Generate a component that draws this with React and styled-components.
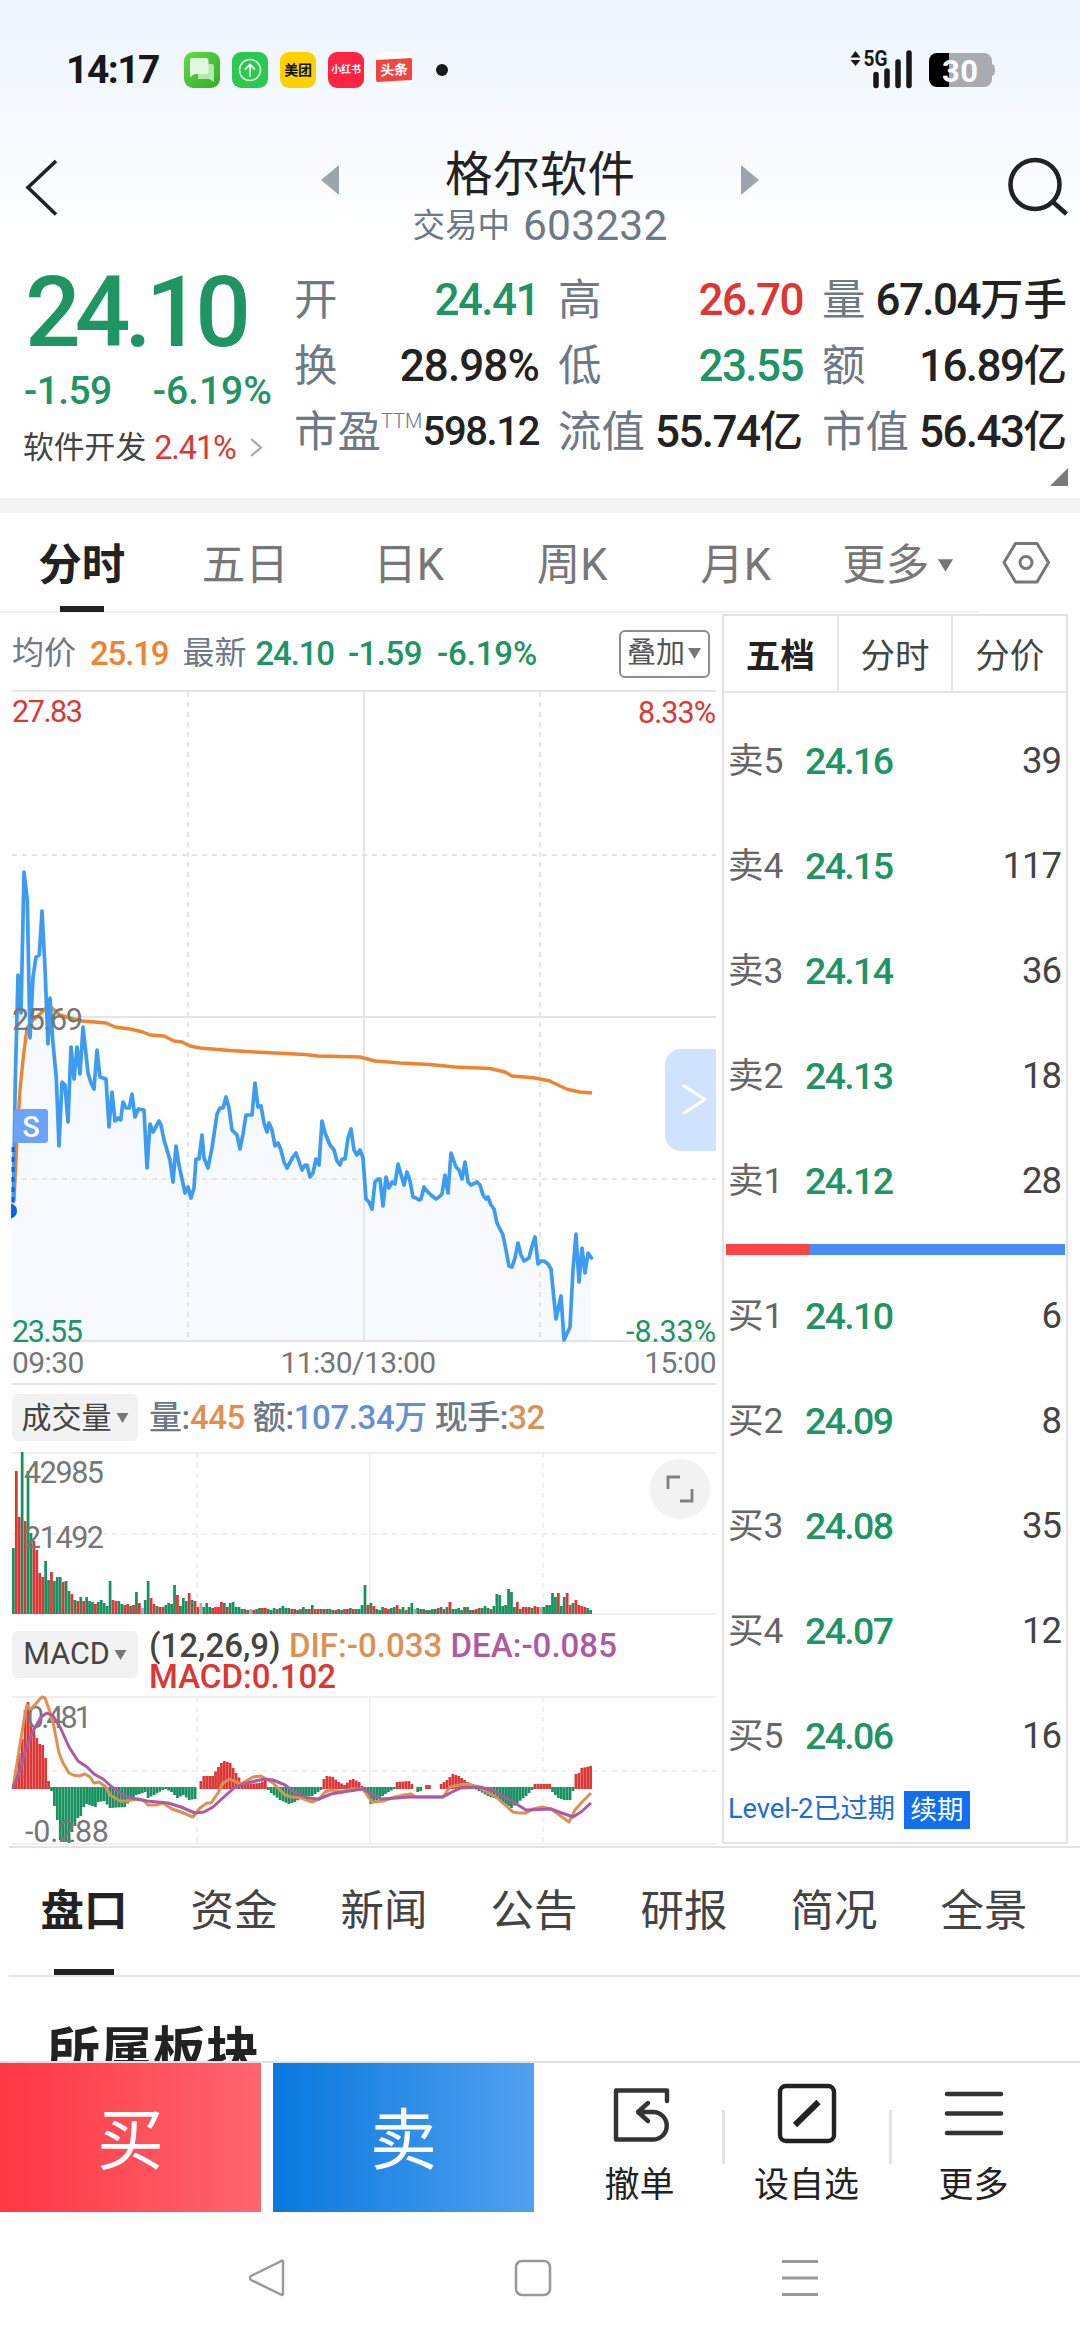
import React from "react";
import styled, { createGlobalStyle } from "styled-components";

const C = {
  ink: "#222222",
  slate: "#6d7985",
  gray: "#777777",
  dark: "#444444",
  green: "#1f9465",
  red: "#dc3734",
  orange: "#ef8430",
  line: "#e4e6e4",
  blue: "#3d9bf0",
};

const Global = createGlobalStyle`
  * { box-sizing: border-box; }
  body { margin: 0; background: #fefefe; }
  #root { width: 1080px; }
`;

const Screen = styled.div`
  width: 1080px;
  height: 2344px;
  overflow: hidden;
  display: flex;
  flex-direction: column;
  background: linear-gradient(180deg, #edf4fe 0, #f4f8ff 90px, #fefefe 235px);
  font-family: Roboto, "Noto Sans CJK SC", sans-serif;
  color: ${C.ink};
  line-height: 1;
  white-space: nowrap;
`;

const Num = styled.span`
  font-size: ${(p) => p.$size}px;
  font-weight: ${(p) => p.$weight || 500};
  color: ${(p) => p.$color || "inherit"};
  letter-spacing: ${(p) => (p.$ls === undefined ? -0.035 : p.$ls)}em;
`;

const Han = styled.span`
  font-size: ${(p) => p.$size}px;
  color: ${(p) => p.$color || "inherit"};
  letter-spacing: 0;
`;

/* ---------- status bar ---------- */
const StatusBar = styled.div`
  height: 124px;
  padding: 16px 84px 0 66px;
  display: flex;
  align-items: center;
  justify-content: space-between;
`;
const StatusGroup = styled.div`
  display: flex;
  align-items: center;
  gap: ${(p) => p.$gap}px;
`;
const Clock = styled.span`
  width: 106px;
  font-size: 39px;
  font-weight: 700;
  letter-spacing: -1.5px;
  color: #181818;
`;
const AppIcon = styled.span`
  width: 36px;
  height: 36px;
  border-radius: 9px;
  display: flex;
  align-items: center;
  justify-content: center;
  overflow: hidden;
  background: ${(p) => p.$bg};
  color: ${(p) => p.$fg || "#fff"};
  font-size: ${(p) => p.$size || 14}px;
  font-weight: 700;
  letter-spacing: -0.2px;
`;
const Ribbon = styled.span`
  width: 36px;
  height: 22px;
  background: #f5443f;
  transform: skewY(-3deg);
  display: flex;
  align-items: center;
  justify-content: center;
`;
const Dot = styled.span`
  width: 12px;
  height: 12px;
  border-radius: 50%;
  margin-left: 12px;
  background: #181818;
`;
const Signal = styled.svg`
  overflow: visible;
`;

/* ---------- title bar ---------- */
const TitleBar = styled.header`
  height: 138px;
  display: flex;
  justify-content: space-between;
  padding: 0 12px 0 24px;
`;
const TitleCenter = styled.div`
  width: 440px;
  display: flex;
  flex-direction: column;
  align-items: center;
  margin-left: 14px;
`;
const TitleRow = styled.div`
  width: 440px;
  height: 62px;
  padding-top: 22px;
  display: flex;
  justify-content: space-between;
  align-items: flex-start;
`;
const StockName = styled.h1`
  margin: 4px 0 0;
  font-size: 47.5px;
  font-weight: 400;
  line-height: 50px;
`;
const SubRow = styled.div`
  display: flex;
  align-items: center;
  gap: 13px;
  margin-top: 19px;
  color: ${C.slate};
`;

/* ---------- quote ---------- */
const Quote = styled.section`
  position: relative;
  height: 236px;
  display: flex;
`;
const PriceCol = styled.div`
  width: 294px;
  padding-left: 22px;
  display: flex;
  flex-direction: column;
`;
const BigPrice = styled.div`
  height: 95px;
  padding: 2px 0 0 3px;
  font-size: 98px;
  font-weight: 500;
  letter-spacing: -6px;
  color: ${C.green};
`;
const ChangeRow = styled.div`
  height: 68px;
  margin-top: 1px;
  padding: 14px 0 0 2px;
  display: flex;
  gap: 41px;
`;
const SectorRow = styled.div`
  display: flex;
  align-items: center;
  gap: 8px;
  height: 36px;
  margin-top: 4px;
  padding-left: 1px;
`;
const Stats = styled.div`
  display: grid;
  grid-template-columns: 245px 245px 245px;
  grid-auto-rows: 66px;
  column-gap: 19px;
  padding-top: 4px;
`;
const Stat = styled.div`
  display: flex;
  align-items: center;
  justify-content: space-between;
  & > ${Num} {
    padding-top: 2px;
  }
`;
const StatLabel = styled.span`
  font-size: 43.5px;
  color: ${C.slate};
  padding-top: 4px;
  display: flex;
`;
const Sup = styled.sup`
  font-size: 20px;
  line-height: 19px;
  font-weight: 300;
  margin-top: 1px;
`;
const Corner = styled.svg`
  position: absolute;
  right: 12px;
  bottom: 12px;
`;
const Gap = styled.div`
  height: 15px;
  background: #f4f4f4;
`;

/* ---------- period tabs ---------- */
const PeriodTabs = styled.nav`
  height: 101px;
  display: flex;
  background: #fefefe;
`;
const PeriodTab = styled.div`
  position: relative;
  width: ${(p) => p.$w || 163.5}px;
  height: 100px;
  padding-top: 7px;
  border-bottom: 2px solid #f1f1f1;
  display: flex;
  align-items: center;
  justify-content: center;
  gap: 9px;
  font-size: 43.5px;
  font-weight: ${(p) => (p.$on ? 700 : 400)};
  color: ${(p) => (p.$on ? C.ink : C.gray)};
  &::after {
    content: "";
    display: ${(p) => (p.$on ? "block" : "none")};
    position: absolute;
    bottom: -1px;
    width: 44px;
    height: 6px;
    background: ${C.ink};
  }
`;

/* ---------- chart + book ---------- */
const Main = styled.section`
  height: 1232px;
  display: flex;
  background: #fefefe;
`;
const Charts = styled.div`
  width: 722px;
  padding-left: 12px;
  display: flex;
  flex-direction: column;
`;
const InfoRow = styled.div`
  height: 78px;
  width: 704px;
  display: flex;
  align-items: center;
  border-bottom: 2px solid ${C.line};
`;
const InfoItem = styled.span`
  margin-left: ${(p) => p.$ml || 0}px;
  padding-top: 2px;
  font-size: 32px;
  color: ${C.slate};
`;
const Overlay = styled.button`
  margin: 3px 6px 0 auto;
  width: 91px;
  height: 48px;
  padding: 0 0 0 6px;
  border: 2px solid #8d8d8d;
  border-radius: 6px;
  background: transparent;
  font: 400 29px/1 Roboto, "Noto Sans CJK SC", sans-serif;
  color: #555;
  display: flex;
  align-items: center;
  gap: 3px;
`;
const Plot = styled.svg`
  display: block;
  flex: none;
  overflow: visible;
`;
const AxisText = styled.text`
  font-size: 30.5px;
  fill: ${(p) => p.$fill || C.gray};
`;
const TimeAxis = styled.div`
  width: 704px;
  height: 43px;
  padding-top: 1px;
  display: flex;
  align-items: center;
  justify-content: space-between;
  border-bottom: 2px solid ${C.line};
  font-size: 30px;
  letter-spacing: -0.6px;
  color: ${C.gray};
`;
const MidTime = styled.span`
  margin-right: 12px;
`;
const IndicatorHead = styled.div`
  height: ${(p) => p.$h}px;
  padding-top: ${(p) => p.$pt}px;
  display: flex;
  gap: 11px;
`;
const Picker = styled.div`
  width: 126px;
  height: 47px;
  border-radius: 6px;
  background: #f2f2f2;
  color: ${C.dark};
  font-size: ${(p) => p.$size}px;
  display: flex;
  align-items: center;
  justify-content: center;
  gap: 4px;
`;
const Legend = styled.div`
  margin-top: ${(p) => p.$mt || 0}px;
  font-size: 33px;
  line-height: ${(p) => p.$lh || 47}px;
  font-weight: 500;
  letter-spacing: ${(p) => p.$ls || 0}px;
  white-space: pre-line;
  color: ${C.slate};
`;
const Tint = styled.span`
  color: ${(p) => p.$c};
`;

/* ---------- order book ---------- */
const Book = styled.aside`
  width: 346px;
  height: 1230px;
  border: 2px solid #e2e2e2;
  display: flex;
  flex-direction: column;
`;
const BookTabs = styled.div`
  display: flex;
  height: 77px;
  border-bottom: 2px solid #e6e6e6;
`;
const BookTab = styled.div`
  flex: 1;
  display: flex;
  align-items: center;
  justify-content: center;
  padding-top: 5px;
  font-size: 34.5px;
  font-weight: ${(p) => (p.$on ? 700 : 400)};
  color: ${(p) => (p.$on ? C.ink : C.dark)};
  & + & {
    border-left: 2px solid #e6e6e6;
  }
`;
const Levels = styled.div`
  padding: ${(p) => p.$pt}px 5px 0 4px;
`;
const Level = styled.div`
  height: 105px;
  display: flex;
  align-items: center;
`;
const Side = styled.span`
  width: 77px;
  font-size: 35.5px;
  color: #666;
`;
const Qty = styled.span`
  margin-left: auto;
  font-size: 36.5px;
  letter-spacing: -1px;
  color: ${C.dark};
`;
const Balance = styled.div`
  display: flex;
  height: 11px;
  margin: 10px 1px 0 2px;
  background: #4a8df8;
  &::before {
    content: "";
    width: 84px;
    background: #fb4445;
  }
`;
const Renew = styled.div`
  display: flex;
  align-items: center;
  gap: 9px;
  padding: 2px 0 0 4px;
  font-size: 27.3px;
  letter-spacing: -0.1px;
  color: #1a6ce0;
`;
const RenewTag = styled.span`
  width: 66px;
  height: 38px;
  background: #126ff0;
  color: #fff;
  font-size: 26.5px;
  display: flex;
  align-items: center;
  justify-content: center;
`;

/* ---------- detail tabs ---------- */
const DetailTabs = styled.nav`
  height: 131px;
  margin-left: 9px;
  border-top: 2px solid #e4e4e4;
  border-bottom: 2px solid #e4e4e4;
  display: flex;
`;
const DetailTab = styled.div`
  position: relative;
  width: 150px;
  display: flex;
  align-items: center;
  justify-content: center;
  font-size: 43.5px;
  font-weight: ${(p) => (p.$on ? 700 : 400)};
  color: ${(p) => (p.$on ? C.ink : C.dark)};
  &::after {
    content: "";
    display: ${(p) => (p.$on ? "block" : "none")};
    position: absolute;
    bottom: 0;
    left: 45px;
    width: 60px;
    height: 6px;
    background: ${C.ink};
  }
`;
const Sector = styled.section`
  height: 84px;
  overflow: hidden;
  padding: 50px 0 0 47px;
`;
const SectorTitle = styled.h2`
  margin: 0;
  font-size: 53px;
  line-height: 52px;
  font-weight: 700;
`;

/* ---------- bottom ---------- */
const ActionBar = styled.div`
  height: 151px;
  border-top: 2px solid #e0e0e0;
  display: flex;
`;
const Trade = styled.button`
  width: 261px;
  height: 149px;
  margin-right: 12px;
  padding: 8px 0 0;
  border: 0;
  color: #fff;
  font: 400 67px/1 Roboto, "Noto Sans CJK SC", sans-serif;
  background: ${(p) => p.$bg};
`;
const Actions = styled.div`
  display: flex;
  padding-left: 10px;
`;
const Action = styled.div`
  position: relative;
  width: 167px;
  padding-top: 15px;
  display: flex;
  flex-direction: column;
  align-items: center;
  font-size: 35px;
  gap: 20px;
  & + &::before {
    content: "";
    position: absolute;
    left: -1px;
    top: 47px;
    width: 3px;
    height: 54px;
    background: #e2e2e2;
  }
`;
const SystemNav = styled.div`
  height: 132px;
  display: flex;
  justify-content: space-between;
  padding: 45px 261px 0 247px;
`;

/* ---------- data ---------- */
const PRICE =
  "13.3,1201.7 15.3,1080 18,975 21,1013 24,872 27.3,900 30,1038 33,977 36,957 39.3,955 42,911 45,968 48,1044 50,998 52.7,1040 56.3,1078 59,1146 62,1082 65,1085 68,1122 71,1047 74,1079 77,1047 80,1074 83,1027 88,1073 91,1083 94,1089 97,1050 100,1077 106,1079 109,1127 112,1092 115,1121 118,1118 120.7,1120 123,1102 126,1108 129.3,1108 132,1094 135,1117 138.3,1109 144,1110 147,1168 150,1124 153,1132 159,1121 161,1125 164,1140 170,1160 173,1182 176,1146 179,1165 185,1193 188,1187 191,1198 194,1188 196,1159 199,1159 202,1135 204,1158 208,1168 212,1148 217,1114 220,1108 223,1108 226,1097 229,1108 232,1130 237,1135 240,1149 243,1134 246,1115 252,1115 255,1083 258,1107 261,1106 264,1123 267,1132 269,1123 272,1130 275,1146 278,1143 281,1150 284,1162 287,1168 293,1157 296,1153 302,1170 305,1165 307,1165 310,1177 313,1173 316,1159 319,1165 322,1121 325,1133 330,1145 334,1150 337,1161 340,1165 342,1159 345,1159 348,1138 351,1129 354,1150 357,1155 360,1150 363,1158 366,1199 369,1202 372,1209 375,1182 378,1179 380,1179 383,1206 386,1177 389,1188 392,1182 395,1184 398,1164 404,1185 407,1172 410,1181 413,1197 416,1198 419,1200 421,1199 424,1187 427,1191 431,1195 436,1199 439,1197 442,1194 445,1175 448,1193 451,1153 456,1167 459,1170 462,1179 465,1162 468,1182 471,1185 477,1182 480,1185 483,1195 486,1199 488,1197 491,1205 494,1209 497,1223 503,1235 506,1250 509,1266 512,1267 515,1258 518,1243 521,1255 524,1261 529,1258 532,1246 535,1237 538,1264 541,1261 544,1261 548,1264 551,1269 556,1319 561,1296 564,1340 570,1327 573,1270 576,1234 579,1282 582,1248 585,1273 588,1253 591.5,1258";
const AVERAGE =
  "14,1201 17,1140 20,1090 23,1060 27,1028 33,1020 40,1014 46,1008 52,1008 60,1015 70,1018 82,1021 106,1023 115,1027 130,1029 143,1032 150,1035 164,1036 174,1041 182,1042 190,1046 200,1048 230,1050.5 255,1052 275,1053 305,1054.5 318,1056 340,1056.5 360,1057 375,1061 400,1063 430,1064.5 455,1067 490,1068.5 505,1072 512,1076 535,1078 550,1081 560,1086 568,1089.5 580,1092 592,1093";
const DIF =
  "13,1788 18,1757 24,1720 27,1705 30,1709 33,1707 39,1700 42,1697 45,1698 50,1712 54,1727 59,1753 63,1763 69,1773 73,1775 79,1776 85,1774 90,1777 94,1783 99,1782 106,1787 110,1795 120,1801 126,1801 138,1799 143,1800 148,1805 156,1805 163,1803 172,1809 181,1812 193,1817 200,1808 207,1803 211,1803 218,1793 223,1783 230,1779 236,1782 241,1784 253,1777 261,1776 266,1779 273,1783 285,1795 292,1797 301,1798 312,1802 319,1799 325,1792 331,1790 342,1792 351,1789 363,1789 367,1795 372,1802 383,1801 395,1797 404,1795 411,1794 416,1797 443,1797 450,1787 459,1785 468,1784 478,1787 487,1792 496,1797 505,1805 513,1812 519,1813 526,1813 533,1809 542,1807 551,1809 558,1814 569,1822 575,1810 583,1801 591,1793";
const DEA =
  "13,1788 21,1768 25,1752 32,1733 41,1717 47,1713 53,1716 60,1727 69,1747 78,1761 87,1767 94,1774 103,1779 112,1787 122,1794 131,1798 147,1801 168,1803 181,1807 195,1813 204,1812 213,1807 225,1796 234,1788 243,1784 264,1779 273,1780 285,1785 294,1792 308,1798 319,1799 331,1794 349,1791 363,1789 370,1793 381,1799 397,1798 409,1797 443,1797 452,1792 461,1788 480,1787 494,1791 510,1800 526,1810 551,1809 562,1813 573,1817 581,1812 591,1803";

const VOLUME = (
  "66g 143r 97r 162g 93r 143g 81g 73r 64r 41r 37r 53g 34g 42r 33g 37g 37g 32r 33g 23g 20r 14g 13r 17g 13r 17g 13g 12g 10r 12g 14g 11g 8g 33g 14r 13r 13g 10g 9r 10r 8g 9r 22g 11r 6x 14g 33g 16r 10r 8g 7r 7r 9g 11g 10g 29g 19r 8g 16g 13g 21r 14g 13r 7r 11x 7g 11g 7g 6r 7r 7r 12r 11g 7r 11g 12g 7g " +
  "7g 5g 5r 4g 5x 4r 5g 6g 6r 6r 5g 4g 6g 5r 6g 8g 6g 6g 5r 5r 4g 5r 7g 5g 5r 9g 5r 5r 5g 5r 5g 5g 4g 4r 5g 4g 5r 5r 6g 5r 5g 5g 9g " +
  "29g 9r 11g 8r 5g 4g 7g 6r 5r 6g 7g 9r 5g 7g 4r 7g 11g 5x 6g 5r 5g 4r 4g 5g 5g 6r 7g 5r 7g 12r 5g 5g 6g 4g 7r 7g 4g 4r 5g 6r 6g 8g 6g 5r 8g 20g 19g 8g 9g 25g 22g 7g 12r 5g 7r 7r 7r 6g 8r 7r 7x 7g 9g 9g 21g 17g 21r 8g 17g 21r 9r 11g 14r 9r 8r 7r 6g 4g"
)
  .split(" ")
  .slice(0, 198)
  .map((s) => ({ h: parseInt(s, 10), tone: s.slice(-1) }));

const MACD_KEYS = [
  [0, 2], [1, 18], [2, 35], [3, 49], [4, 78], [5, 86], [6, 64], [7, 57], [8, 50], [9, 44], [10, 43], [11, 30], [12, 7],
  [13, -3], [14, -18], [15, -32], [16, -52], [18, -52], [19, -55], [20, -44], [21, -38], [22, -30], [23, -28], [24, -19],
  [25, -16], [28, -19], [29, -14], [31, -13], [33, -20], [38, -19], [40, -12], [42, -7], [45, -4], [46, -10], [48, -7],
  [51, -2], [52, -1], [54, -4], [56, -10], [58, -7], [60, -12], [62, -11], [63, 0], [64, 7], [65, 12], [68, 12],
  [70, 21], [71, 25], [72, 27], [74, 25], [76, 15], [78, 6], [80, 4], [84, 5], [86, 8], [87, -2], [88, -5], [91, -12], [94, -16],
  [96, -14], [99, -9], [102, -8], [105, -2], [106, 9], [107, 12], [109, 11], [111, 6], [113, 3], [115, 8], [116, 9],
  [118, 6], [120, -2], [121, -8], [122, -16], [125, -10], [128, -4], [130, -1], [131, 6], [135, 7], [136, 4], [137, 0],
  [138, -4], [139, -3], [140, 0], [141, 3], [142, 3], [143, 0], [145, 0], [146, 4], [148, 8], [150, 14], [152, 12], [155, 6], [157, 0],
  [159, -3], [162, -8], [166, -12], [170, -20], [172, -15], [175, -8], [177, -2], [178, 4], [183, 4], [184, -4],
  [186, -10], [188, -12], [190, -12], [191, -3], [192, 14], [193, 15], [194, 20], [197, 22],
];
const macdAt = (i) => {
  const k = MACD_KEYS.findIndex(([x]) => x >= i);
  const [x1, y1] = MACD_KEYS[k];
  if (x1 === i) return y1;
  const [x0, y0] = MACD_KEYS[k - 1];
  return y0 + ((y1 - y0) * (i - x0)) / (x1 - x0);
};
const TONE = { r: C.red, g: "#189160", x: "#aaaaaa" };
const barX = (i) => 12 + i * 2.93;

const ASKS = [["卖5", "24.16", 39], ["卖4", "24.15", 117], ["卖3", "24.14", 36], ["卖2", "24.13", 18], ["卖1", "24.12", 28]];
const BIDS = [["买1", "24.10", 6], ["买2", "24.09", 8], ["买3", "24.08", 35], ["买4", "24.07", 12], ["买5", "24.06", 16]];

const Tri = ({ w = 13, h = 11 }) => (
  <svg width={w} height={h} viewBox="0 0 13 11">
    <path d="M0 0H13L6.5 11Z" fill="#777" />
  </svg>
);

const LevelRows = ({ rows, pt }) => (
  <Levels $pt={pt}>
    {rows.map(([side, price, qty]) => (
      <Level key={side}>
        <Side>{side}</Side>
        <Num $size={37.5} $color={C.green} $ls={-0.044}>{price}</Num>
        <Qty>{qty}</Qty>
      </Level>
    ))}
  </Levels>
);

const PriceChart = () => (
  <Plot width="704" height="650" viewBox="12 692 704 650">
    <polygon points={`${PRICE} 591.5,1342 12,1342 12,1201`} fill="#f6faff" />
    <g stroke={C.line} strokeWidth="2">
      <path d="M364 692V1342M12 1017H716M12 1341H716" />
      <path d="M188 692V1342M540 692V1342M12 855H716M12 1179H716" strokeDasharray="5 5" />
    </g>
    <polyline points={AVERAGE} fill="none" stroke={C.orange} strokeWidth="3.4" strokeLinejoin="round" />
    <polyline points={PRICE} fill="none" stroke={C.blue} strokeWidth="3.7" strokeLinejoin="round" strokeLinecap="round" />
    <AxisText x="12" y="1030" textLength="71">25.69</AxisText>
    <path d="M13 1147V1202" stroke="#1560e0" strokeWidth="3" strokeDasharray="5 5" />
    <path d="M12 1205a6.500 6.500 0 0 1 0 12Z" fill="#0f62ee" stroke="#0f62ee" strokeWidth="2" />
    <rect x="13.5" y="1109" width="34.5" height="34" rx="3" fill="#6aa3f8" />
    <text x="31" y="1137" fontSize="29" fontWeight="500" fill="#fff" textAnchor="middle">S</text>
    <AxisText x="12" y="722" textLength="71" $fill={C.red}>27.83</AxisText>
    <AxisText x="638" y="723" textLength="78" $fill={C.red}>8.33%</AxisText>
    <AxisText x="12" y="1342" textLength="71" $fill={C.green}>23.55</AxisText>
    <AxisText x="626" y="1342" textLength="90" $fill={C.green}>-8.33%</AxisText>
    <path d="M716 1049H681a16 16 0 0 0-16 16v70a16 16 0 0 0 16 16H716Z" fill="#cfe2fe" />
    <path d="M684 1086L705 1099.5L684 1113" fill="none" stroke="#fff" strokeWidth="3.2" strokeLinecap="round" strokeLinejoin="round" />
  </Plot>
);

const VolumeChart = () => (
  <Plot width="704" height="164" viewBox="12 1452 704 164">
    <g stroke="#efefef" strokeWidth="2">
      <path d="M12 1453H716M12 1614H716M370 1453V1614" />
      <path d="M197 1453V1614M543 1453V1614M12 1534H716" strokeDasharray="5 5" />
    </g>
    {VOLUME.map((b, i) => (
      <rect key={i} x={barX(i)} y={1614 - b.h} width="2.75" height={b.h} fill={TONE[b.tone]} />
    ))}
    <AxisText x="24" y="1483" textLength="80">42985</AxisText>
    <AxisText x="24" y="1548" textLength="80">21492</AxisText>
    <circle cx="680" cy="1489" r="30" fill="#f2f2f2" />
    <path d="M680 1477H668V1489M680 1501H692V1489" fill="none" stroke="#808080" strokeWidth="2.8" />
  </Plot>
);

const MacdChart = () => (
  <Plot width="704" height="150" viewBox="12 1696 704 150">
    <g stroke="#efefef" strokeWidth="2">
      <path d="M12 1697H716M12 1844H716M370 1697V1844" />
      <path d="M197 1697V1844M543 1697V1844M12 1771H716" strokeDasharray="5 5" />
    </g>
    {VOLUME.map((_, i) => {
      const v = macdAt(i);
      if (Math.abs(v) < 0.8) return null;
      return v > 0 ? (
        <rect key={i} x={barX(i)} y={1788 - v} width="2.75" height={v + 1} fill={C.red} />
      ) : (
        <rect key={i} x={barX(i)} y={1787} width="2.75" height={1 - v} fill={TONE.g} />
      );
    })}
    <AxisText x="27" y="1728" textLength="65">0.481</AxisText>
    <AxisText x="25" y="1842" textLength="84">-0.288</AxisText>
    <polyline points={DIF} fill="none" stroke="#dc9153" strokeWidth="3" strokeLinejoin="round" />
    <polyline points={DEA} fill="none" stroke="#ad5aa3" strokeWidth="3" strokeLinejoin="round" />
  </Plot>
);

export default function App() {
  return (
    <Screen>
      <Global />
      <StatusBar>
        <StatusGroup $gap={12}>
          <Clock>14:17</Clock>
          <AppIcon $bg="linear-gradient(135deg,#5fdc4a,#37a92a)">
            <svg width="36" height="36" viewBox="0 0 36 36">
              <path d="M14 12H28a2 2 0 0 1 2 2V30L25 27H14Z" fill="#b4e8ac" />
              <path d="M8 6H22a2.500 2.500 0 0 1 2.500 2.500V20a2 2 0 0 1-2 2H11L6 25V8a2 2 0 0 1 2-2Z" fill="#e3f9df" />
            </svg>
          </AppIcon>
          <AppIcon $bg="#2cc950">
            <svg width="36" height="36" viewBox="0 0 36 36" fill="none" stroke="#e9fbec" strokeWidth="1.500">
              <circle cx="18" cy="18" r="10.500" />
              <path d="M18 24.500V12.500M13 17.500L18 12.500L23 17.500" strokeWidth="1.800" />
            </svg>
          </AppIcon>
          <AppIcon $bg="#ffd100" $fg="#111">美团</AppIcon>
          <AppIcon $bg="#ff2343" $size={10}>小红书</AppIcon>
          <AppIcon $bg="#fff"><Ribbon>头条</Ribbon></AppIcon>
          <Dot />
        </StatusGroup>
        <Signal width="146" height="40" viewBox="850 50 146 40">
          <path d="M850.500 57.500L855.500 51L860.500 57.500ZM850.500 60L855.500 66L860.500 60Z" fill="#181818" />
          <text x="863.500" y="66" fontSize="21.500" fontWeight="700" textLength="24" lengthAdjust="spacingAndGlyphs" fill="#181818">5G</text>
          <path d="M876 74.500V85.500M887 71V85.500M898 62V85.500M909 53V85.500" stroke="#181818" strokeWidth="5.500" strokeLinecap="round" />
          <path d="M949 53H984a8 8 0 0 1 8 8V64q3 1 3 6t-3 6V79a8 8 0 0 1-8 8H949Z" fill="#a8abaf" />
          <path d="M949 53H937a8 8 0 0 0-8 8V79a8 8 0 0 0 8 8H949Z" fill="#000" />
          <text x="942" y="82" fontSize="31" fontWeight="700" fill="#fafcff" textLength="36">30</text>
        </Signal>
      </StatusBar>

      <TitleBar>
        <svg width="36" height="100" viewBox="24 124 36 100">
          <path d="M56 161L28 187.500L56 214.500" fill="none" stroke={C.ink} strokeWidth="3.600" />
        </svg>
        <TitleCenter>
          <TitleRow>
            <svg width="20" height="72" viewBox="0 0 20 72"><path d="M19 19V49L1 34Z" fill="#9aa5ae" /></svg>
            <StockName>格尔软件</StockName>
            <svg width="20" height="72" viewBox="0 0 20 72"><path d="M1 19V49L19 34Z" fill="#9aa5ae" /></svg>
          </TitleRow>
          <SubRow>
            <Han $size={32.5}>交易中</Han>
            <Num $size={42.5} $weight={400} $ls={0.005}>603232</Num>
          </SubRow>
        </TitleCenter>
        <svg width="62" height="100" viewBox="1006 124 62 100" fill="none" stroke={C.ink}>
          <circle cx="1035" cy="184.500" r="24.500" strokeWidth="4.600" />
          <path d="M1053 202L1066.500 214" strokeWidth="4.600" />
        </svg>
      </TitleBar>

      <Quote>
        <PriceCol>
          <BigPrice>24.10</BigPrice>
          <ChangeRow>
            <Num $size={39} $color={C.green} $ls={-0.015}>-1.59</Num>
            <Num $size={39} $color={C.green} $ls={0}>-6.19%</Num>
          </ChangeRow>
          <SectorRow>
            <Han $size={30.8} $color={C.dark}>软件开发</Han>
            <Num $size={32.5} $weight={400} $color={C.red}>2.41%</Num>
            <svg width="20" height="22" viewBox="-4 0 20 22">
              <path d="M3 2L13 10.500L3 19" fill="none" stroke="#a3abb3" strokeWidth="2.200" />
            </svg>
          </SectorRow>
        </PriceCol>
        <Stats>
          <Stat><StatLabel>开</StatLabel><Num $size={44} $color={C.green}>24.41</Num></Stat>
          <Stat><StatLabel>高</StatLabel><Num $size={44} $color={C.red}>26.70</Num></Stat>
          <Stat><StatLabel>量</StatLabel><Num $size={44}>67.04<Han $size={43.5}>万手</Han></Num></Stat>
          <Stat><StatLabel>换</StatLabel><Num $size={44} $ls={-0.02}>28.98%</Num></Stat>
          <Stat><StatLabel>低</StatLabel><Num $size={44} $color={C.green}>23.55</Num></Stat>
          <Stat><StatLabel>额</StatLabel><Num $size={44}>16.89<Han $size={43.5}>亿</Han></Num></Stat>
          <Stat><StatLabel>市盈<Sup>TTM</Sup></StatLabel><Num $size={40}>598.12</Num></Stat>
          <Stat><StatLabel>流值</StatLabel><Num $size={44}>55.74<Han $size={43.5}>亿</Han></Num></Stat>
          <Stat><StatLabel>市值</StatLabel><Num $size={44}>56.43<Han $size={43.5}>亿</Han></Num></Stat>
        </Stats>
        <Corner width="18" height="18"><path d="M18 0V18H0Z" fill="#7a7a7a" /></Corner>
      </Quote>
      <Gap />

      <PeriodTabs>
        <PeriodTab $on>分时</PeriodTab>
        <PeriodTab>五日</PeriodTab>
        <PeriodTab>日K</PeriodTab>
        <PeriodTab>周K</PeriodTab>
        <PeriodTab>月K</PeriodTab>
        <PeriodTab $w={160.5}>更多<Tri w={15} h={13} /></PeriodTab>
        <svg width="80" height="98" viewBox="978 513 80 98" fill="none" stroke="#777" strokeWidth="3">
          <path d="M1015.500 543.500H1037L1048.500 562.500L1037 582H1015.500L1004 562.500Z" strokeLinejoin="round" />
          <circle cx="1026" cy="562.500" r="6" />
        </svg>
      </PeriodTabs>

      <Main>
        <Charts>
          <InfoRow>
            <InfoItem>均价</InfoItem>
            <InfoItem $ml={14}><Num $size={33} $color={C.orange}>25.19</Num></InfoItem>
            <InfoItem $ml={14}>最新</InfoItem>
            <InfoItem $ml={9}><Num $size={33} $color={C.green}>24.10</Num></InfoItem>
            <InfoItem $ml={14}><Num $size={33} $color={C.green} $ls={-0.015}>-1.59</Num></InfoItem>
            <InfoItem $ml={15}><Num $size={33} $color={C.green} $ls={-0.005}>-6.19%</Num></InfoItem>
            <Overlay>叠加<Tri /></Overlay>
          </InfoRow>
          <PriceChart />
          <TimeAxis><span>09:30</span><MidTime>11:30/13:00</MidTime><span>15:00</span></TimeAxis>
          <IndicatorHead $h={67} $pt={9}>
            <Picker $size={30}>成交量<Tri w={13} h={10} /></Picker>
            <Legend $ls={-0.4}>
              量:<Tint $c="#dc9153">445</Tint> 额:<Tint $c="#648fd2">107.34万</Tint> 现手:<Tint $c="#dc9153">32</Tint>
            </Legend>
          </IndicatorHead>
          <VolumeChart />
          <IndicatorHead $h={80} $pt={15}>
            <Picker $size={30.5}>MACD<Tri w={13} h={10} /></Picker>
            <Legend $mt={-1} $lh={31} $ls={0.02}>
              <Tint $c={C.dark}>(12,26,9)</Tint> <Tint $c="#dc9153">DIF:-0.033</Tint> <Tint $c="#ad5aa3">DEA:-0.085</Tint>
              <br />
              <Tint $c={C.red}>MACD:0.102</Tint>
            </Legend>
          </IndicatorHead>
          <MacdChart />
        </Charts>
        <Book>
          <BookTabs>
            <BookTab $on>五档</BookTab>
            <BookTab>分时</BookTab>
            <BookTab>分价</BookTab>
          </BookTabs>
          <LevelRows rows={ASKS} pt={16} />
          <Balance />
          <LevelRows rows={BIDS} pt={9} />
          <Renew>Level-2已过期<RenewTag>续期</RenewTag></Renew>
        </Book>
      </Main>

      <DetailTabs>
        {["盘口", "资金", "新闻", "公告", "研报", "简况", "全景"].map((t, i) => (
          <DetailTab key={t} $on={i === 0}>{t}</DetailTab>
        ))}
      </DetailTabs>
      <Sector><SectorTitle>所属板块</SectorTitle></Sector>

      <ActionBar>
        <Trade $bg="linear-gradient(90deg,#ff3743,#ff6570)">买</Trade>
        <Trade $bg="linear-gradient(90deg,#0878de,#50a1ef)">卖</Trade>
        <Actions>
          <Action>
            <svg width="76" height="70" viewBox="602 2078 76 70" fill="none" stroke="#333" strokeWidth="4.400" strokeLinecap="round" strokeLinejoin="round">
              <path d="M667 2101V2090.500H616V2139.500H653A13.750 13.750 0 0 0 653 2112H638M648 2103L638 2112L648 2121" />
            </svg>
            撤单
          </Action>
          <Action>
            <svg width="76" height="70" viewBox="769 2078 76 70" fill="none" stroke={C.ink}>
              <rect x="780" y="2086" width="54" height="55" rx="6" strokeWidth="4.400" />
              <path d="M795 2125L818.500 2102" strokeWidth="6" />
            </svg>
            设自选
          </Action>
          <Action>
            <svg width="76" height="70" viewBox="936 2078 76 70" stroke="#333" strokeWidth="4.600" strokeLinecap="round">
              <path d="M947 2094H1001M947 2113.500H1001M947 2133H1001" />
            </svg>
            更多
          </Action>
        </Actions>
      </ActionBar>

      <SystemNav>
        <svg width="38" height="42" viewBox="246 2257 38 42"><path d="M282 2262V2294a1 1 0 0 1-1.700.7L250 2280a2.500 2.500 0 0 1 0-4L280.300 2261a1 1 0 0 1 1.700 1Z" fill="none" stroke="#999" strokeWidth="2.400" /></svg>
        <svg width="38" height="42" viewBox="515 2257 38 42"><rect x="517" y="2261" width="34" height="34" rx="6" fill="none" stroke="#999" strokeWidth="2.600" /></svg>
        <svg width="38" height="42" viewBox="781 2257 38 42"><path d="M782 2261.500H818M782 2278H818M782 2294.500H818" stroke="#999" strokeWidth="2.800" /></svg>
      </SystemNav>
    </Screen>
  );
}
